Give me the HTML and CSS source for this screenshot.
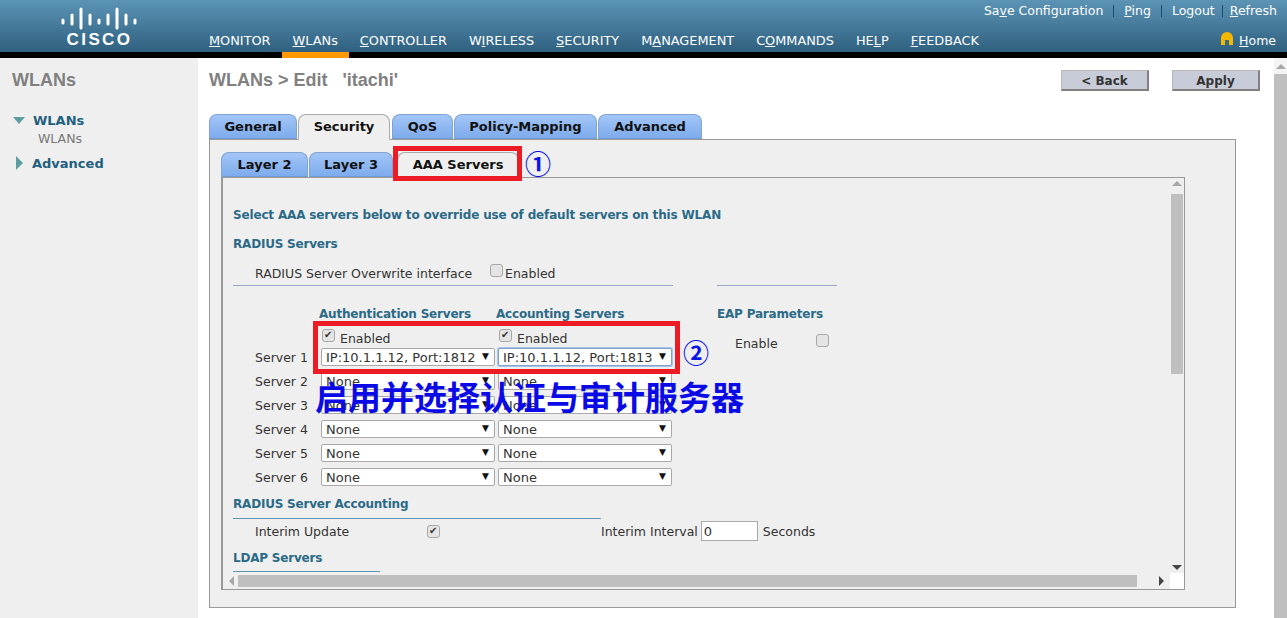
FILE: index.html
```html
<!DOCTYPE html>
<html lang="zh-CN">
<head>
    <meta charset="UTF-8">
    <title>WLANs &gt; Edit</title>
    <link rel="stylesheet" href="styles.css">
</head>
<body>
    <header class="topbar">
        <div class="logo">
            <svg class="logo-bars" width="80" height="24" viewBox="0 0 80 24">
                <g stroke="#ffffff" stroke-width="3" stroke-linecap="round">
                    <path d="M4 14v3M13 9v9M22 3v19M31 9v9M40 14v3M49 9v9M58 3v19M67 9v9M76 14v3"/>
                </g>
            </svg>
            <div class="logo-text">CISCO</div>
        </div>
        <div class="topbar-right">
            <div class="toplinks">
                <a>Sa<u>v</u>e Configuration</a><span class="sep sep-wide"></span>
                <a><u>P</u>ing</a><span class="sep sep-wide"></span>
                <a>Lo<u>g</u>out</a><span class="sep"></span>
                <a><u>R</u>efresh</a>
            </div>
            <nav class="mainnav">
                <a class="nav-item"><u>M</u>ONITOR</a>
                <a class="nav-item active"><u>W</u>LANs</a>
                <a class="nav-item"><u>C</u>ONTROLLER</a>
                <a class="nav-item">W<u>I</u>RELESS</a>
                <a class="nav-item"><u>S</u>ECURITY</a>
                <a class="nav-item">M<u>A</u>NAGEMENT</a>
                <a class="nav-item">C<u>O</u>MMANDS</a>
                <a class="nav-item">HE<u>L</u>P</a>
                <a class="nav-item"><u>F</u>EEDBACK</a>
                <a class="home">
                    <svg width="14" height="14" viewBox="0 0 14 14"><path d="M1 13V6a6 6 0 0 1 12 0v7H9V8H5v5z" fill="#f5b800"/></svg>
                    <span><u>H</u>ome</span>
                </a>
            </nav>
        </div>
    </header>

    <div class="page">
        <aside class="sidebar">
            <h2 class="side-title">WLANs</h2>
            <div class="side-group"><span class="tri-down"></span><b>WLANs</b></div>
            <div class="side-sub">WLANs</div>
            <div class="side-group side-adv"><span class="tri-right"></span><b>Advanced</b></div>
        </aside>

        <main class="content">
            <div class="titlerow">
                <h1 class="page-title">WLANs &gt; Edit <span class="itachi">'itachi'</span></h1>
                <div class="actions">
                    <button class="btn">&lt; Back</button>
                    <button class="btn">Apply</button>
                </div>
            </div>

            <div class="tabs">
                <a class="tab tab-general">General</a>
                <a class="tab tab-on tab-security">Security</a>
                <a class="tab tab-qos">QoS</a>
                <a class="tab tab-policy">Policy-Mapping</a>
                <a class="tab tab-adv">Advanced</a>
            </div>

            <section class="panel">
                <div class="tabs">
                    <a class="tab tab-l2">Layer 2</a>
                    <a class="tab tab-l3">Layer 3</a>
                    <a class="tab tab-on tab-aaa">AAA Servers</a>
                    <span class="mark mark-tab"></span>
                    <span class="num num-1">①</span>
                </div>

                <div class="inner">
                    <div class="inner-view">
                        <p class="lead">Select AAA servers below to override use of default servers on this WLAN</p>
                        <h3 class="sec sec-radius">RADIUS Servers</h3>

                        <div class="overwrite">
                            <span class="overwrite-label">RADIUS Server Overwrite interface</span>
                            <label class="check-label"><input type="checkbox" class="cb">Enabled</label>
                        </div>
                        <div class="rules">
                            <div class="rule rule-a"></div>
                            <div class="rule rule-b"></div>
                        </div>

                        <div class="servers">
                            <div class="srv-label"></div>
                            <div class="col-head">Authentication Servers</div>
                            <div class="col-head">Accounting Servers</div>
                            <div class="col-head c4">EAP Parameters</div>

                            <div class="srv-label"></div>
                            <label class="enabled"><input type="checkbox" class="cb" checked>Enabled</label>
                            <label class="enabled"><input type="checkbox" class="cb" checked>Enabled</label>
                            <div class="eap c4"><span>Enable</span><input type="checkbox" class="cb"></div>

                            <div class="srv-label">Server 1</div>
                            <div class="sel"><select><option>IP:10.1.1.12, Port:1812</option></select></div>
                            <div class="sel sel-focus"><select><option>IP:10.1.1.12, Port:1813</option></select></div>

                            <div class="srv-label">Server 2</div>
                            <div class="sel"><select><option>None</option></select></div>
                            <div class="sel"><select><option>None</option></select></div>

                            <div class="srv-label">Server 3</div>
                            <div class="sel"><select><option>None</option></select></div>
                            <div class="sel"><select><option>None</option></select></div>

                            <div class="srv-label">Server 4</div>
                            <div class="sel"><select><option>None</option></select></div>
                            <div class="sel"><select><option>None</option></select></div>

                            <div class="srv-label">Server 5</div>
                            <div class="sel"><select><option>None</option></select></div>
                            <div class="sel"><select><option>None</option></select></div>

                            <div class="srv-label">Server 6</div>
                            <div class="sel"><select><option>None</option></select></div>
                            <div class="sel"><select><option>None</option></select></div>
                        </div>

                        <h3 class="sec sec-acct">RADIUS Server Accounting</h3>
                        <div class="rule rule-acct"></div>
                        <div class="interim">
                            <span class="interim-label">Interim Update</span>
                            <input type="checkbox" class="cb" checked>
                            <span class="interval">Interim Interval</span>
                            <input type="text" class="interval-input" value="0">
                            <span>Seconds</span>
                        </div>
                        <h3 class="sec sec-ldap">LDAP Servers</h3>
                        <div class="rule rule-ldap"></div>

                        <span class="mark mark-servers"></span>
                        <span class="num num-2">②</span>
                        <div class="callout">启用并选择认证与审计服务器</div>
                    </div>

                    <div class="vbar">
                        <span class="arr arr-up"></span>
                        <span class="vthumb"></span>
                        <span class="arr arr-down"></span>
                    </div>
                    <div class="hbar">
                        <span class="arr arr-left"></span>
                        <span class="hthumb"></span>
                        <span class="arr arr-right"></span>
                    </div>
                    <div class="corner"></div>
                </div>
            </section>
        </main>

        <div class="pagebar">
            <span class="arr arr-up"></span>
            <span class="page-thumb"></span>
        </div>
    </div>
</body>
</html>
```

FILE: styles.css
```css
* {
    box-sizing: border-box;
}

html, body {
    margin: 0;
    height: 618px;
    overflow: hidden;
    background-color: #ffffff;
}

body {
    font-family: "DejaVu Sans", Verdana, sans-serif;
    font-size: 12.5px;
    color: #333333;
}

/* header */
.topbar {
    display: flex;
    height: 58px;
    background: linear-gradient(#5c94b6, #2f607f 52px, #000000 52px);
    color: #ffffff;
}

.logo {
    width: 198px;
    flex: none;
    padding: 6px 0 0 59px;
}

.logo-bars {
    display: block;
}

.logo-text {
    width: 80px;
    margin-top: 1px;
    padding-left: 1px;
    text-align: center;
    font-family: "Liberation Sans", Arial, sans-serif;
    font-size: 17px;
    line-height: 18px;
    font-weight: bold;
    letter-spacing: 2.4px;
}

.topbar-right {
    flex: 1;
    display: flex;
    flex-direction: column;
}

.toplinks {
    display: flex;
    justify-content: flex-end;
    align-items: center;
    height: 21px;
    padding-right: 10px;
}

.sep {
    width: 1px;
    height: 12px;
    margin: 0 7px;
    background-color: #1d4a6b;
}

.sep-wide {
    margin: 0 10px;
}

.mainnav {
    display: flex;
    height: 37px;
    font-size: 12.875px;
}

.nav-item {
    display: block;
    height: 37px;
    padding: 12px 11px 0;
    line-height: 16px;
}

.nav-item.active {
    background: linear-gradient(transparent 31px, #ff9900 31px);
}

.home {
    display: flex;
    align-items: flex-start;
    gap: 5px;
    margin-left: auto;
    padding: 11px 11px 0 0;
    font-size: 12.5px;
    line-height: 18px;
}

/* page */
.page {
    display: flex;
    height: 560px;
}

.sidebar {
    width: 198px;
    flex: none;
    padding: 12px 0 0 12px;
    background-color: #efefef;
    color: #1f5f7f;
    font-weight: bold;
}

.side-title {
    margin: 0 0 20px;
    font-family: "Liberation Sans", Arial, sans-serif;
    font-size: 18px;
    line-height: 20px;
    color: #808080;
}

.side-group {
    display: flex;
    align-items: center;
    height: 20px;
    font-size: 13px;
}

.side-group b {
    margin-left: 9px;
}

.tri-down {
    width: 0;
    margin-left: 1px;
    margin-right: -1px;
    border-left: 6px solid transparent;
    border-right: 6px solid transparent;
    border-top: 7px solid #5f9ea0;
}

.tri-right {
    width: 0;
    margin-left: 4px;
    border-top: 7px solid transparent;
    border-bottom: 7px solid transparent;
    border-left: 7px solid #5f9ea0;
}

.side-sub {
    margin-top: 1px;
    padding-left: 26px;
    font-weight: normal;
    line-height: 16px;
    color: #777777;
}

.side-adv {
    margin-top: 6px;
}

.content {
    flex: 1;
    padding: 0 14px 0 11px;
}

.titlerow {
    display: flex;
    justify-content: space-between;
    height: 56px;
}

.page-title {
    margin: 12px 0 0;
    font-family: "Liberation Sans", Arial, sans-serif;
    font-size: 18px;
    line-height: 20px;
    color: #808080;
}

.itachi {
    margin-left: 10px;
}

.actions {
    display: flex;
    gap: 23px;
    padding-top: 12px;
}

.btn {
    width: 88px;
    height: 21px;
    padding: 1px 0 0;
    background-color: #c8ccd8;
    border: 1px solid #b8b8b8;
    border-bottom: 2px solid #808080;
    border-right: 2px solid #808080;
    font-family: inherit;
    font-size: 12px;
    font-weight: bold;
    color: #333333;
}

.tabs {
    position: relative;
    display: flex;
    height: 25px;
}

.tab {
    display: block;
    height: 25px;
    padding-top: 3px;
    margin-right: 1px;
    text-align: center;
    background: linear-gradient(#a3c6f7, #7dabec);
    border: 1px solid #7fa3d3;
    border-bottom: 1px solid #6f9bd0;
    border-radius: 8px 8px 0 0;
    font-size: 13px;
    font-weight: bold;
    line-height: 18px;
    color: #111111;
}

.tab-on {
    background: #efefef;
    border-color: #aaaaaa;
    border-bottom-color: #efefef;
    position: relative;
    z-index: 1;
    height: 26px;
}

.tab-general { width: 88px; }
.tab-security { width: 92px; margin-right: 2px; }
.tab-qos { width: 61px; }
.tab-policy { width: 143px; margin-right: 1px; }
.tab-adv { width: 104px; }
.tab-l2 { width: 87px; margin-right: 1px; }
.tab-l3 { width: 84px; margin-right: 4px; }
.tab-aaa { width: 122px; }

.panel {
    width: 1027px;
    height: 469px;
    padding: 12px 50px 0 11px;
    background-color: #efefef;
    border: 1px solid #999999;
}

.mark {
    position: absolute;
    border: 5px solid #ed1c24;
    z-index: 3;
}

.mark-tab {
    left: 172px;
    top: -6px;
    width: 129px;
    height: 35px;
}

.num {
    position: absolute;
    font-family: "Noto Sans CJK SC", sans-serif;
    font-size: 26px;
    font-weight: bold;
    line-height: 30px;
    color: #0a14e6;
    z-index: 3;
}

.num-1 {
    left: 304px;
    top: -4px;
}

.inner {
    display: grid;
    grid-template-columns: 1fr 14px;
    grid-template-rows: 1fr 16px;
    height: 413px;
    border: 1px solid #999999;
    border-left-width: 2px;
}

.inner-view {
    position: relative;
    overflow: hidden;
    padding: 0 0 0 10px;
}

.lead {
    margin: 0;
    padding-top: 29px;
    font-size: 12px;
    font-weight: bold;
    line-height: 16px;
    letter-spacing: -0.16px;
    color: #2b6a87;
}

.sec {
    margin: 0;
    font-size: 12px;
    font-weight: bold;
    line-height: 16px;
    letter-spacing: -0.2px;
    color: #2b6a87;
}

.sec-radius {
    margin-top: 13px;
}

.overwrite {
    display: flex;
    align-items: center;
    height: 18px;
    margin-top: 12px;
    padding-left: 22px;
}

.overwrite-label {
    width: 235px;
}

.check-label {
    display: flex;
    align-items: center;
}

.cb {
    appearance: none;
    width: 13px;
    height: 13px;
    margin: 0;
    flex: none;
    position: relative;
    background-color: #e4e4e4;
    border: 1px solid #a8a8a8;
    border-radius: 3px;
}

.cb:checked::after {
    content: "✔";
    position: absolute;
    left: 1px;
    top: -2px;
    font-size: 10px;
    line-height: 14px;
    color: #333333;
}

.check-label .cb {
    margin: -5px 2px 0 0;
}

.rules {
    display: flex;
    gap: 44px;
    margin-top: 3px;
}

.rule {
    height: 1px;
    background-color: #9aa6c8;
}

.rule-a { width: 440px; }
.rule-b { width: 120px; }

.servers {
    display: grid;
    grid-template-columns: 85px 174px 174px 1fr;
    grid-template-rows: 24px 20px;
    grid-auto-rows: 24px;
    column-gap: 3px;
    align-items: center;
    margin-top: 15px;
}

.col-head {
    margin: 2px 0 0 -2px;
    font-size: 12px;
    font-weight: bold;
    letter-spacing: -0.2px;
    color: #2b6a87;
    line-height: 24px;
}

.c4 {
    margin-left: 42px;
}

.enabled {
    display: flex;
    align-items: center;
    gap: 5px;
    padding: 7px 0 0 1px;
}

.enabled .cb {
    margin-top: -6px;
}

.eap {
    grid-row: span 2;
    display: flex;
    align-items: center;
    align-self: start;
    padding: 11px 0 0 18px;
    gap: 38px;
}

.eap .cb {
    margin-top: -6px;
}

.srv-label {
    grid-column: 1;
    padding-left: 22px;
}

.sel {
    position: relative;
    height: 18px;
}

.sel::after {
    content: "▼";
    position: absolute;
    right: 6px;
    top: 1px;
    font-size: 9px;
    line-height: 14px;
    color: #111111;
}

.sel select {
    appearance: none;
    display: block;
    width: 100%;
    height: 18px;
    padding: 0 0 0 4px;
    background-color: #ffffff;
    border: 1px solid #a9a9a9;
    border-radius: 2px;
    font-family: inherit;
    font-size: 13px;
    color: #333333;
}

.sel-focus select {
    border-color: #7da2ce;
    box-shadow: 0 0 0 1px #a9c6e8;
}

.sec-acct {
    margin-top: 7px;
}

.rule-acct {
    width: 368px;
    margin-top: 6px;
    background-color: #5f93b3;
}

.interim {
    display: flex;
    align-items: center;
    height: 22px;
    margin-top: 1px;
    padding-left: 22px;
}

.interim-label {
    width: 172px;
}

.interval {
    margin-left: 161px;
    margin-right: 3px;
}

.interval-input {
    width: 57px;
    height: 20px;
    margin-right: 5px;
    padding: 0 0 0 2px;
    background-color: #ffffff;
    border: 1px solid #a9a9a9;
    font-family: inherit;
    font-size: 13px;
    color: #333333;
}

.sec-ldap {
    margin-top: 8px;
}

.rule-ldap {
    width: 147px;
    margin-top: 5px;
    background-color: #5f93b3;
}

.mark-servers {
    left: 90px;
    top: 143px;
    width: 367px;
    height: 53px;
}

.num-2 {
    left: 460px;
    top: 159px;
}

.callout {
    position: absolute;
    left: 92px;
    top: 198px;
    font-family: "Noto Sans CJK SC", sans-serif;
    font-size: 33px;
    line-height: 40px;
    font-weight: bold;
    white-space: nowrap;
    color: #0a0ae6;
    z-index: 4;
}

/* scrollbars */
.vbar {
    display: flex;
    flex-direction: column;
    align-items: center;
    padding: 0 1px 0 0;
}

.vthumb {
    width: 12px;
    height: 180px;
    margin-top: 8px;
    background-color: #bfbfbf;
}

.vbar .arr-up {
    margin-top: 3px;
}

.vbar .arr-down {
    margin-top: auto;
    margin-bottom: 3px;
}

.hbar {
    display: flex;
    align-items: center;
    padding-left: 6px;
}

.hthumb {
    width: 899px;
    height: 12px;
    margin-left: 4px;
    background-color: #bfbfbf;
}

.hbar .arr-right {
    margin-left: 22px;
}

.corner {
    background-color: #ffffff;
}

.arr {
    display: block;
    width: 0;
    height: 0;
    flex: none;
}

.arr-up {
    border-left: 5px solid transparent;
    border-right: 5px solid transparent;
    border-bottom: 5px solid #a8a8a8;
}

.arr-down {
    border-left: 5px solid transparent;
    border-right: 5px solid transparent;
    border-top: 5px solid #444444;
}

.arr-left {
    border-top: 5px solid transparent;
    border-bottom: 5px solid transparent;
    border-right: 5px solid #a8a8a8;
}

.arr-right {
    border-top: 5px solid transparent;
    border-bottom: 5px solid transparent;
    border-left: 5px solid #444444;
}

.pagebar {
    width: 13px;
    flex: none;
    display: flex;
    flex-direction: column;
    align-items: center;
    background-color: #f4f4f4;
}

.pagebar .arr-up {
    margin-top: 6px;
}

.page-thumb {
    width: 13px;
    flex: 1;
    margin-top: 5px;
    background-color: #bfbfbf;
}
```
